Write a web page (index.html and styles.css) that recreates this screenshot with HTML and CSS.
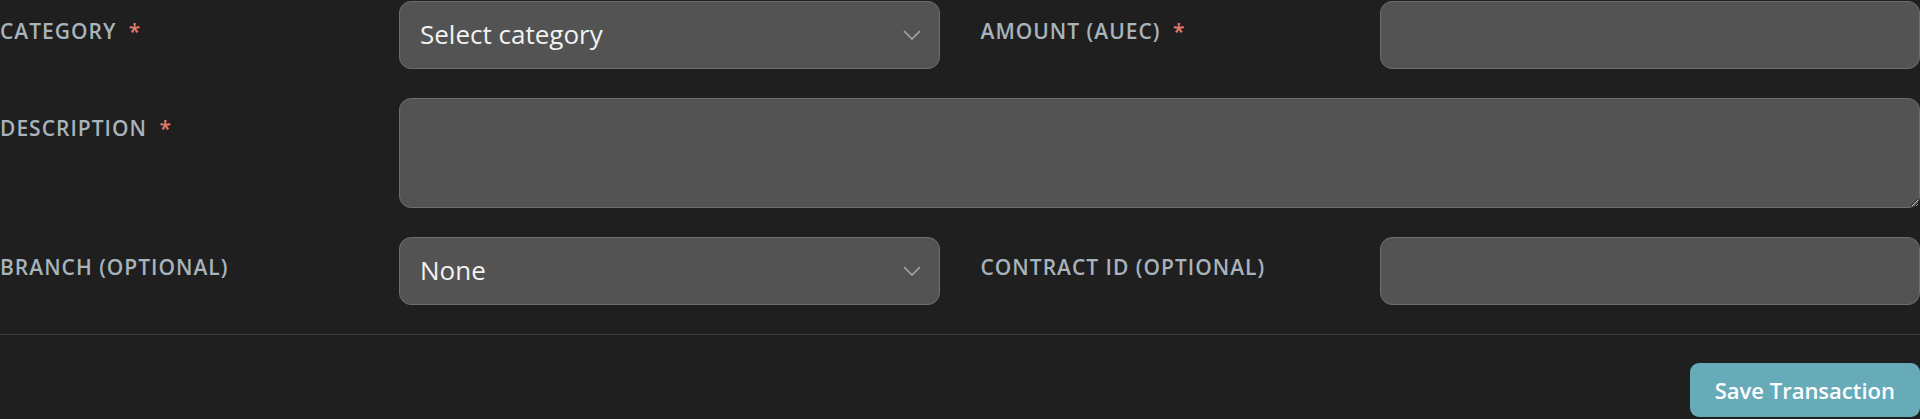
FILE: index.html
```html
<!DOCTYPE html>
<html lang="en">
<head>
<meta charset="UTF-8">
<meta name="viewport" content="width=device-width, initial-scale=1.0">
<title>New Transaction</title>
<link rel="stylesheet" href="styles.css">
</head>
<body>
<form class="tx-form">
  <div class="form-grid">
    <label class="field-label" for="category">Category <span class="req">*</span></label>
    <div class="select-wrap">
      <select id="category" class="field">
        <option>Select category</option>
      </select>
      <svg class="chevron" width="18" height="10" viewBox="0 0 18 10"><path d="M1 1 L9 9 L17 1" fill="none" stroke="#a9a9a9" stroke-width="1.5"/></svg>
    </div>
    <label class="field-label" for="amount">Amount (aUEC) <span class="req">*</span></label>
    <input id="amount" class="field" type="text">

    <label class="field-label" for="description">Description <span class="req">*</span></label>
    <textarea id="description" class="field field-wide"></textarea>

    <label class="field-label" for="branch">Branch (optional)</label>
    <div class="select-wrap">
      <select id="branch" class="field">
        <option>None</option>
      </select>
      <svg class="chevron" width="18" height="10" viewBox="0 0 18 10"><path d="M1 1 L9 9 L17 1" fill="none" stroke="#a9a9a9" stroke-width="1.5"/></svg>
    </div>
    <label class="field-label" for="contract">Contract ID (optional)</label>
    <input id="contract" class="field" type="text">
  </div>

  <div class="form-footer">
    <button type="submit" class="save-btn">Save Transaction</button>
  </div>
</form>
</body>
</html>
```

FILE: styles.css
```css
body {
  margin: 0;
  padding-top: 1px;
  background: #1f1f1f;
  color: #eee;
  font-family: "Open Sans", "Noto Sans", sans-serif;
  height: 419px;
  overflow: hidden;
}
.form-grid {
  display: grid;
  grid-template-columns: 358px 1fr 358px 1fr;
  column-gap: 41px;
  row-gap: 29px;
  align-items: start;
}
.field-label {
  padding-top: 16px;
  font-size: 21px;
  font-weight: 600;
  letter-spacing: 1px;
  text-transform: uppercase;
  color: #a8b3bb;
}
.req {
  margin-left: 6px;
  color: #e07a6b;
}
.field {
  box-sizing: border-box;
  width: 100%;
  height: 68px;
  padding: 0 20px 2px;
  background: #535353;
  border: 1px solid #6d6d6d;
  border-radius: 12px;
  color: #f2f2f2;
  font-family: inherit;
  font-size: 26px;
  outline: none;
}
.field-wide {
  grid-column: 2 / 5;
  height: 110px;
  padding: 14px 20px;
  resize: vertical;
  color-scheme: dark;
}
.select-wrap {
  position: relative;
}
.select-wrap select {
  appearance: none;
  -webkit-appearance: none;
}
.chevron {
  position: absolute;
  right: 19px;
  top: 29px;
  pointer-events: none;
}
.form-footer {
  margin-top: 29px;
  padding-top: 28px;
  border-top: 1px solid #3b3b3b;
  display: flex;
  justify-content: flex-end;
}
.save-btn {
  height: 54px;
  padding: 0 25px;
  border: none;
  border-radius: 9px;
  background: #67aab8;
  color: #fff;
  font-family: inherit;
  font-size: 22px;
  font-weight: 600;
  cursor: pointer;
}
```
